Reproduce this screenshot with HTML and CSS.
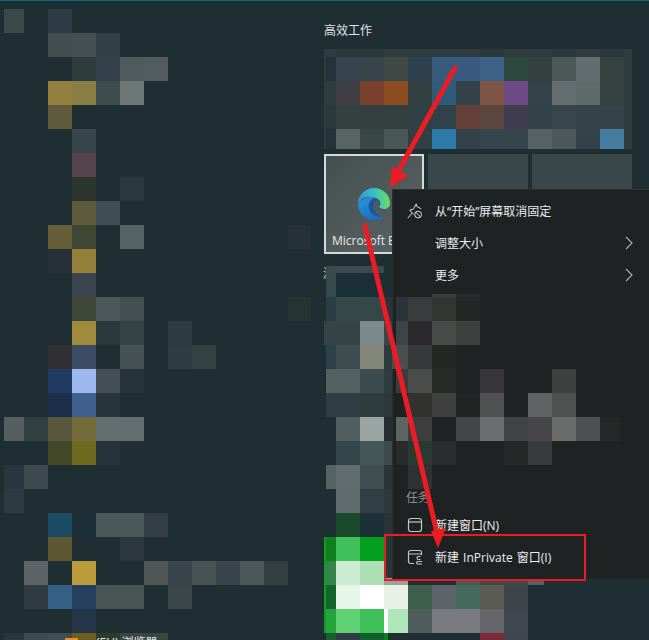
FILE: index.html
```html
<!DOCTYPE html>
<html lang="zh-CN">
<head>
    <meta charset="UTF-8">
    <meta name="viewport" content="width=device-width, initial-scale=1.0">
    <title>高效工作</title>
    <link rel="stylesheet" href="styles.css">
</head>
<body>
<div class="screen">
    <!-- blurred start menu behind everything -->
    <svg class="backdrop" width="649" height="640" viewBox="0 0 649 640">
        <rect x="0" y="0" width="649" height="1" fill="#02707f"/>
        <!-- left column -->
        <rect x="4" y="9" width="20" height="24" fill="#3a4849"/>
        <rect x="48" y="9" width="24" height="24" fill="#2d3b44"/>
        <rect x="48" y="33" width="24" height="24" fill="#434c4f"/>
        <rect x="72" y="33" width="24" height="24" fill="#434f50"/>
        <rect x="96" y="33" width="24" height="24" fill="#333f47"/>
        <rect x="72" y="57" width="24" height="24" fill="#2f3c3d"/>
        <rect x="96" y="57" width="24" height="24" fill="#35414a"/>
        <rect x="120" y="57" width="24" height="24" fill="#4e5a5c"/>
        <rect x="144" y="57" width="24" height="24" fill="#525c60"/>
        <rect x="48" y="81" width="24" height="24" fill="#93803f"/>
        <rect x="72" y="81" width="24" height="24" fill="#8b7e42"/>
        <rect x="96" y="81" width="24" height="24" fill="#3f4c4e"/>
        <rect x="120" y="81" width="24" height="24" fill="#6d7778"/>
        <rect x="48" y="105" width="24" height="24" fill="#5f5a3b"/>
        <rect x="72" y="129" width="24" height="24" fill="#36454a"/>
        <rect x="72" y="153" width="24" height="24" fill="#54434c"/>
        <rect x="72" y="177" width="24" height="24" fill="#2d352f"/>
        <rect x="120" y="177" width="24" height="24" fill="#2b383e"/>
        <rect x="72" y="201" width="24" height="24" fill="#5c5b3d"/>
        <rect x="96" y="201" width="24" height="24" fill="#3f4c54"/>
        <rect x="48" y="225" width="24" height="24" fill="#655e38"/>
        <rect x="72" y="225" width="24" height="24" fill="#414635"/>
        <rect x="120" y="225" width="24" height="24" fill="#566366"/>
        <rect x="288" y="225" width="23" height="24" fill="#263038"/>
        <rect x="48" y="249" width="24" height="24" fill="#242f37"/>
        <rect x="72" y="249" width="24" height="24" fill="#94803b"/>
        <rect x="72" y="273" width="24" height="24" fill="#39444e"/>
        <rect x="72" y="297" width="24" height="24" fill="#3d4639"/>
        <rect x="96" y="297" width="24" height="24" fill="#4c5759"/>
        <rect x="120" y="297" width="24" height="24" fill="#434e50"/>
        <rect x="288" y="297" width="23" height="24" fill="#263333"/>
        <rect x="72" y="321" width="24" height="24" fill="#a08a3c"/>
        <rect x="96" y="321" width="24" height="24" fill="#2a373d"/>
        <rect x="120" y="321" width="24" height="24" fill="#354347"/>
        <rect x="168" y="321" width="24" height="24" fill="#2c3a42"/>
        <rect x="48" y="345" width="24" height="24" fill="#302f33"/>
        <rect x="72" y="345" width="24" height="24" fill="#3c4c64"/>
        <rect x="120" y="345" width="24" height="24" fill="#465156"/>
        <rect x="168" y="345" width="24" height="24" fill="#2e3c44"/>
        <rect x="192" y="345" width="24" height="24" fill="#344143"/>
        <rect x="48" y="369" width="24" height="24" fill="#213a62"/>
        <rect x="72" y="369" width="24" height="24" fill="#9db9ef"/>
        <rect x="96" y="369" width="24" height="24" fill="#434e54"/>
        <rect x="120" y="369" width="24" height="24" fill="#26323a"/>
        <rect x="48" y="393" width="24" height="24" fill="#1b2f4a"/>
        <rect x="72" y="393" width="24" height="24" fill="#40608f"/>
        <rect x="96" y="393" width="24" height="24" fill="#28353b"/>
        <rect x="4" y="417" width="20" height="24" fill="#555f60"/>
        <rect x="24" y="417" width="24" height="24" fill="#323f3f"/>
        <rect x="48" y="417" width="24" height="24" fill="#59573d"/>
        <rect x="72" y="417" width="24" height="24" fill="#746b3b"/>
        <rect x="96" y="417" width="48" height="24" fill="#646e6f"/>
        <rect x="48" y="441" width="24" height="24" fill="#434828"/>
        <rect x="72" y="441" width="24" height="24" fill="#6d6a20"/>
        <rect x="96" y="441" width="24" height="24" fill="#27333b"/>
        <rect x="4" y="465" width="20" height="24" fill="#293640"/>
        <rect x="24" y="465" width="24" height="24" fill="#3e4a50"/>
        <rect x="4" y="489" width="20" height="24" fill="#2c3a42"/>
        <rect x="48" y="513" width="24" height="24" fill="#1b4b60"/>
        <rect x="72" y="513" width="24" height="24" fill="#1d303a"/>
        <rect x="96" y="513" width="48" height="24" fill="#4b5859"/>
        <rect x="144" y="513" width="24" height="24" fill="#323e44"/>
        <rect x="48" y="537" width="24" height="24" fill="#5d5833"/>
        <rect x="120" y="537" width="24" height="24" fill="#2c383e"/>
        <rect x="24" y="561" width="24" height="24" fill="#5c6365"/>
        <rect x="72" y="561" width="24" height="24" fill="#bc9c3a"/>
        <rect x="144" y="561" width="24" height="24" fill="#4f5656"/>
        <rect x="168" y="561" width="24" height="24" fill="#39444a"/>
        <rect x="192" y="561" width="24" height="24" fill="#485253"/>
        <rect x="216" y="561" width="24" height="24" fill="#39444a"/>
        <rect x="240" y="561" width="24" height="24" fill="#4c5758"/>
        <rect x="264" y="561" width="24" height="24" fill="#323e3f"/>
        <rect x="24" y="585" width="24" height="24" fill="#303b42"/>
        <rect x="48" y="585" width="24" height="24" fill="#356085"/>
        <rect x="72" y="585" width="24" height="24" fill="#253f5e"/>
        <rect x="96" y="585" width="48" height="24" fill="#495455"/>
        <rect x="168" y="585" width="24" height="24" fill="#3a4649"/>
        <rect x="72" y="609" width="24" height="24" fill="#263649"/>
        <rect x="4" y="633" width="20" height="7" fill="#2a363e"/>
        <rect x="24" y="633" width="24" height="7" fill="#3d4950"/>
        <rect x="48" y="633" width="24" height="7" fill="#3f4c56"/>
        <rect x="72" y="633" width="24" height="7" fill="#6d5f20"/>
        <rect x="96" y="633" width="24" height="7" fill="#2f3d2e"/>
        <rect x="120" y="633" width="48" height="7" fill="#3a4646"/>
        <rect x="65" y="638" width="13" height="2" fill="#e8902a"/>
        <text class="cut-text" x="96" y="647">(EU) 浏览器</text>
        <!-- column under the edge tile -->
        <text class="cut-label" x="323" y="278">游戏</text>
        <rect x="326" y="266" width="10" height="7" fill="#3a4a4b"/>
        <rect x="336" y="266" width="48" height="7" fill="#3d4b50"/>
        <rect x="326" y="273" width="10" height="24" fill="#38494a"/>
        <rect x="336" y="273" width="24" height="24" fill="#1c3038"/>
        <rect x="360" y="273" width="24" height="24" fill="#1b2f38"/>
        <rect x="326" y="297" width="10" height="24" fill="#2b3e45"/>
        <rect x="336" y="297" width="48" height="24" fill="#354748"/>
        <rect x="384" y="297" width="8" height="24" fill="#293639"/>
        <rect x="324" y="321" width="36" height="24" fill="#354547"/>
        <rect x="360" y="321" width="24" height="24" fill="#7d8a8c"/>
        <rect x="384" y="321" width="8" height="24" fill="#3b4648"/>
        <rect x="326" y="345" width="10" height="24" fill="#2d3f48"/>
        <rect x="336" y="345" width="24" height="24" fill="#3d4c4f"/>
        <rect x="360" y="345" width="24" height="24" fill="#818679"/>
        <rect x="384" y="345" width="8" height="24" fill="#2d3b3f"/>
        <rect x="326" y="369" width="34" height="24" fill="#546163"/>
        <rect x="360" y="369" width="24" height="24" fill="#3e4b4e"/>
        <rect x="384" y="369" width="8" height="24" fill="#2f3c40"/>
        <rect x="326" y="393" width="34" height="24" fill="#2f3e45"/>
        <rect x="360" y="393" width="24" height="24" fill="#2e3c3e"/>
        <rect x="384" y="393" width="8" height="24" fill="#2a383b"/>
        <rect x="336" y="417" width="24" height="24" fill="#505e60"/>
        <rect x="360" y="417" width="24" height="24" fill="#9aa5a4"/>
        <rect x="384" y="417" width="8" height="24" fill="#282d2f"/>
        <rect x="336" y="441" width="24" height="24" fill="#34464a"/>
        <rect x="360" y="441" width="24" height="24" fill="#455658"/>
        <rect x="384" y="441" width="8" height="24" fill="#3f4a4c"/>
        <rect x="326" y="465" width="10" height="24" fill="#566365"/>
        <rect x="336" y="465" width="24" height="24" fill="#626d6f"/>
        <rect x="360" y="465" width="24" height="24" fill="#3f4e50"/>
        <rect x="384" y="465" width="8" height="24" fill="#293538"/>
        <rect x="336" y="489" width="24" height="24" fill="#5e6a6c"/>
        <rect x="360" y="489" width="24" height="24" fill="#2f3f44"/>
        <rect x="384" y="489" width="8" height="24" fill="#2c383c"/>
        <rect x="336" y="513" width="24" height="24" fill="#1b4a2c"/>
        <rect x="360" y="513" width="24" height="24" fill="#1c3038"/>
        <rect x="384" y="513" width="8" height="24" fill="#2a3438"/>
        <!-- green tile -->
        <rect x="324" y="537" width="2" height="96" fill="#0da01d"/>
        <rect x="326" y="537" width="10" height="24" fill="#0f7f1f"/>
        <rect x="336" y="537" width="24" height="24" fill="#3ec15a"/>
        <rect x="360" y="537" width="24" height="24" fill="#04a01f"/>
        <rect x="384" y="537" width="8" height="24" fill="#253a33"/>
        <rect x="326" y="561" width="10" height="24" fill="#37844a"/>
        <rect x="336" y="561" width="24" height="24" fill="#cbecd2"/>
        <rect x="360" y="561" width="24" height="24" fill="#addfb6"/>
        <rect x="384" y="561" width="24" height="24" fill="#2a3438"/>
        <rect x="384" y="578" width="24" height="7" fill="#9aa39c"/>
        <rect x="456" y="578" width="24" height="7" fill="#4a5a50"/>
        <rect x="480" y="578" width="24" height="7" fill="#3d4a44"/>
        <rect x="504" y="578" width="24" height="7" fill="#3e484a"/>
        <rect x="528" y="578" width="16" height="7" fill="#5a5f60"/>
        <rect x="326" y="585" width="10" height="24" fill="#16652e"/>
        <rect x="336" y="585" width="24" height="24" fill="#e6f7ea"/>
        <rect x="360" y="585" width="24" height="24" fill="#ffffff"/>
        <rect x="384" y="585" width="24" height="24" fill="#e7f0e6"/>
        <rect x="408" y="585" width="24" height="24" fill="#3d5f4b"/>
        <rect x="432" y="585" width="24" height="24" fill="#5f6468"/>
        <rect x="456" y="585" width="24" height="24" fill="#446a5e"/>
        <rect x="480" y="585" width="24" height="24" fill="#5a5a52"/>
        <rect x="504" y="585" width="24" height="24" fill="#3d444a"/>
        <rect x="326" y="609" width="10" height="24" fill="#27a33e"/>
        <rect x="336" y="609" width="24" height="24" fill="#5fd173"/>
        <rect x="360" y="609" width="24" height="24" fill="#3fc058"/>
        <rect x="384" y="609" width="4" height="24" fill="#ffffff"/>
        <rect x="388" y="609" width="20" height="24" fill="#b0e6bb"/>
        <rect x="408" y="609" width="24" height="24" fill="#4e5c5c"/>
        <rect x="432" y="609" width="48" height="24" fill="#787c80"/>
        <rect x="480" y="609" width="24" height="24" fill="#64666c"/>
        <rect x="504" y="609" width="24" height="24" fill="#41474e"/>
        <rect x="326" y="633" width="10" height="7" fill="#1f5c2f"/>
        <rect x="336" y="633" width="24" height="7" fill="#2e3b45"/>
        <rect x="360" y="633" width="24" height="7" fill="#10602a"/>
        <rect x="384" y="633" width="4" height="7" fill="#0f7f1f"/>
        <rect x="480" y="633" width="24" height="7" fill="#7c2b3a"/>
        <rect x="504" y="633" width="24" height="7" fill="#3f4650"/>
    </svg>

    <section class="group">
        <h2 class="group-title">高效工作</h2>
        <svg class="tile-block" width="308" height="100" viewBox="324 49 308 100">
            <rect x="324" y="49" width="308" height="100" fill="#2e3c3f"/>
            <rect x="336" y="49" width="48" height="8" fill="#2a383c"/>
            <rect x="480" y="49" width="24" height="8" fill="#2a3a3a"/>
            <rect x="552" y="49" width="24" height="8" fill="#2a383c"/>
            <rect x="600" y="49" width="24" height="8" fill="#2a383c"/>
            <rect x="326" y="57" width="10" height="24" fill="#24323a"/>
            <rect x="326" y="105" width="10" height="24" fill="#2a383c"/>
            <rect x="326" y="129" width="10" height="20" fill="#24323a"/>
            <rect x="336" y="57" width="24" height="24" fill="#37444d"/>
            <rect x="360" y="57" width="24" height="24" fill="#37454b"/>
            <rect x="384" y="57" width="24" height="24" fill="#3f4845"/>
            <rect x="408" y="57" width="24" height="24" fill="#2e404d"/>
            <rect x="432" y="57" width="24" height="24" fill="#365b7d"/>
            <rect x="456" y="57" width="24" height="24" fill="#3a5a80"/>
            <rect x="480" y="57" width="24" height="24" fill="#3d6285"/>
            <rect x="504" y="57" width="24" height="24" fill="#2c483f"/>
            <rect x="528" y="57" width="24" height="24" fill="#343f40"/>
            <rect x="552" y="57" width="24" height="24" fill="#4d5859"/>
            <rect x="576" y="57" width="24" height="24" fill="#636c70"/>
            <rect x="600" y="57" width="24" height="24" fill="#354141"/>
            <rect x="336" y="81" width="24" height="24" fill="#403f43"/>
            <rect x="360" y="81" width="24" height="24" fill="#77412d"/>
            <rect x="384" y="81" width="24" height="24" fill="#8b4d20"/>
            <rect x="408" y="81" width="24" height="24" fill="#303f3f"/>
            <rect x="432" y="81" width="24" height="24" fill="#2e5b78"/>
            <rect x="456" y="81" width="24" height="24" fill="#33414a"/>
            <rect x="480" y="81" width="24" height="24" fill="#7e5445"/>
            <rect x="504" y="81" width="24" height="24" fill="#6e4a86"/>
            <rect x="528" y="81" width="24" height="24" fill="#354249"/>
            <rect x="552" y="81" width="24" height="24" fill="#646e70"/>
            <rect x="576" y="81" width="24" height="24" fill="#5e6a6a"/>
            <rect x="600" y="81" width="24" height="24" fill="#354141"/>
            <rect x="336" y="105" width="72" height="24" fill="#344040"/>
            <rect x="408" y="105" width="24" height="24" fill="#304045"/>
            <rect x="432" y="105" width="24" height="24" fill="#304249"/>
            <rect x="456" y="105" width="24" height="24" fill="#643f37"/>
            <rect x="480" y="105" width="24" height="24" fill="#5e4640"/>
            <rect x="504" y="105" width="24" height="24" fill="#413d50"/>
            <rect x="528" y="105" width="24" height="24" fill="#334149"/>
            <rect x="552" y="105" width="24" height="24" fill="#38454b"/>
            <rect x="576" y="105" width="48" height="24" fill="#35444b"/>
            <rect x="336" y="129" width="24" height="20" fill="#586464"/>
            <rect x="360" y="129" width="24" height="20" fill="#394646"/>
            <rect x="384" y="129" width="24" height="20" fill="#4a5757"/>
            <rect x="408" y="129" width="24" height="20" fill="#304044"/>
            <rect x="432" y="129" width="24" height="20" fill="#2d7ba8"/>
            <rect x="456" y="129" width="24" height="20" fill="#33424a"/>
            <rect x="480" y="129" width="48" height="20" fill="#36444c"/>
            <rect x="528" y="129" width="24" height="20" fill="#566262"/>
            <rect x="552" y="129" width="24" height="20" fill="#4c5858"/>
            <rect x="576" y="129" width="24" height="20" fill="#334149"/>
            <rect x="600" y="129" width="24" height="20" fill="#467c9f"/>
        </svg>
        <div class="tile-row">
            <div class="tile tile-edge">
                <svg class="edge-logo" width="32" height="32" viewBox="0 0 32 32">
                    <defs>
                        <linearGradient id="edgeTop" x1="0" y1="0.5" x2="1" y2="0.5">
                            <stop offset="0" stop-color="#2a9ad8"/>
                            <stop offset="0.5" stop-color="#35bfc6"/>
                            <stop offset="1" stop-color="#72dc62"/>
                        </linearGradient>
                        <linearGradient id="edgeBody" x1="0" y1="0" x2="0.6" y2="1">
                            <stop offset="0" stop-color="#2a95e0"/>
                            <stop offset="1" stop-color="#1a6fc4"/>
                        </linearGradient>
                    </defs>
                    <path fill="#1a559f" d="M10 20C10 13 16 9 22 11L26 29C23 31 19 32 16 32 12 30 10 25 10 20Z"/>
                    <path fill="url(#edgeBody)" d="M0 16C0 25 7 32 16 32 20 32 24 31 27 28 22 30 15 28 12 23 9 18 11 11 18 9 10 8 2 11 0 16Z"/>
                    <path fill="#505b5c" d="M15 17C15 14 18 12 20.500 13 22 15 22 17 20.500 19 22 22 25 23 29 22.500 28.500 25 27.500 27 26 29 20 29 15 24 15 17Z"/>
                    <path fill="url(#edgeTop)" d="M0 16C0 7 7 0 16 0 25 0 32 7 32 15 32 19 29 21 26 21 24 21 22 20 21 19 23 17 23 14 21 12 17 8 10 8 5 10 2 12 1 13 0 16Z"/>
                </svg>
                <span class="tile-name">Microsoft Edge</span>
            </div>
            <div class="tile"></div>
            <div class="tile"></div>
        </div>
    </section>

    <!-- context menu -->
    <div class="menu">
        <div class="menu-row">
            <svg class="menu-icon" width="17" height="18" viewBox="0 0 17 18" fill="none" stroke="#e0e2e2" stroke-width="1.100">
                <path d="M.5 17L5 11.500M2.500 8L6.500 7 10 1 10 3.500 15.500 6.500"/>
                <path d="M2.500 8L7 13"/>
                <circle cx="12" cy="13" r="3.800"/>
                <path d="M9.500 10.500l5 5"/>
            </svg>
            <span>从“开始”屏幕取消固定</span>
        </div>
        <div class="menu-row">
            <span class="menu-icon"></span>
            <span>调整大小</span>
            <svg class="chevron" width="8" height="14" viewBox="0 0 8 14" fill="none" stroke="#a8aaaa" stroke-width="1.200"><path d="M1 1l6 6-6 6"/></svg>
        </div>
        <div class="menu-row">
            <span class="menu-icon"></span>
            <span>更多</span>
            <svg class="chevron" width="8" height="14" viewBox="0 0 8 14" fill="none" stroke="#a8aaaa" stroke-width="1.200"><path d="M1 1l6 6-6 6"/></svg>
        </div>
        <!-- blurred list of recent items -->
        <svg class="menu-blur" width="257" height="198" viewBox="392 291 257 198">
            <rect x="432" y="294" width="24" height="3" fill="#3c3f3f"/>
            <rect x="456" y="294" width="24" height="3" fill="#2a2d2d"/>
            <rect x="396" y="297" width="12" height="24" fill="#2b3539"/>
            <rect x="408" y="297" width="24" height="24" fill="#383c3c"/>
            <rect x="432" y="297" width="24" height="24" fill="#333533"/>
            <rect x="456" y="297" width="24" height="24" fill="#242725"/>
            <rect x="396" y="321" width="12" height="24" fill="#3e4345"/>
            <rect x="408" y="321" width="24" height="24" fill="#2a2a2c"/>
            <rect x="432" y="321" width="24" height="24" fill="#494b4a"/>
            <rect x="456" y="321" width="24" height="24" fill="#3e403e"/>
            <rect x="392" y="345" width="16" height="24" fill="#4a4e4e"/>
            <rect x="408" y="345" width="24" height="24" fill="#36393a"/>
            <rect x="432" y="345" width="24" height="24" fill="#252725"/>
            <rect x="396" y="369" width="12" height="24" fill="#3a3d3c"/>
            <rect x="408" y="369" width="24" height="24" fill="#4a4c4a"/>
            <rect x="432" y="369" width="24" height="24" fill="#282a27"/>
            <rect x="480" y="369" width="24" height="24" fill="#373739"/>
            <rect x="552" y="369" width="24" height="24" fill="#3f413f"/>
            <rect x="408" y="393" width="24" height="24" fill="#323230"/>
            <rect x="432" y="393" width="24" height="24" fill="#3f403f"/>
            <rect x="456" y="393" width="24" height="24" fill="#232524"/>
            <rect x="480" y="393" width="24" height="24" fill="#4f5050"/>
            <rect x="528" y="393" width="24" height="24" fill="#616264"/>
            <rect x="552" y="393" width="24" height="24" fill="#4f514f"/>
            <rect x="396" y="417" width="12" height="24" fill="#5c6464"/>
            <rect x="408" y="417" width="24" height="24" fill="#3d3d3f"/>
            <rect x="456" y="417" width="24" height="24" fill="#434646"/>
            <rect x="480" y="417" width="24" height="24" fill="#6a6e6e"/>
            <rect x="504" y="417" width="24" height="24" fill="#404343"/>
            <rect x="528" y="417" width="24" height="24" fill="#474749"/>
            <rect x="552" y="417" width="24" height="24" fill="#6a6c6a"/>
            <rect x="576" y="417" width="24" height="24" fill="#4e4f50"/>
            <rect x="600" y="417" width="20" height="24" fill="#262828"/>
            <rect x="396" y="441" width="12" height="24" fill="#282c2e"/>
            <rect x="408" y="441" width="24" height="24" fill="#2a3a30"/>
            <rect x="432" y="441" width="24" height="24" fill="#292d2d"/>
            <rect x="504" y="441" width="24" height="24" fill="#252827"/>
            <rect x="528" y="441" width="24" height="24" fill="#373b3b"/>
            <rect x="408" y="465" width="24" height="24" fill="#2e3232"/>
        </svg>
        <div class="menu-label">任务</div>
        <div class="menu-row">
            <svg class="menu-icon" width="16" height="16" viewBox="0 0 16 16" fill="none" stroke="#c4c6c6" stroke-width="1.200">
                <rect x="1.500" y="1.500" width="13" height="13" rx="2.500"/>
                <path d="M1.500 5h13"/>
            </svg>
            <span>新建窗口(N)</span>
        </div>
        <div class="menu-row">
            <svg class="menu-icon" width="16" height="16" viewBox="0 0 16 16" fill="none" stroke="#c4c6c6" stroke-width="1.200">
                <path d="M7 14.500H3.500a2 2 0 0 1-2-2v-9a2 2 0 0 1 2-2h9a2 2 0 0 1 2 2V6M1.500 5h13"/>
                <path d="M13.500 7.500h-2a1.500 1.500 0 0 0 0 3h2M15 12.500H10.500a1.300 1.300 0 0 0 0 2.500H15"/>
            </svg>
            <span>新建 InPrivate 窗口(I)</span>
        </div>
    </div>

    <!-- annotations drawn on the screenshot -->
    <svg class="marks" width="649" height="640" viewBox="0 0 649 640">
        <rect x="385" y="535" width="200" height="45" fill="none" stroke="#ec1c24" stroke-width="2"/>
        <path d="M455 68L398 172" stroke="#ec1c24" stroke-width="5" stroke-linecap="round"/>
        <path d="M390 188L392 166 408 176Z" fill="#ec1c24"/>
        <path d="M365 226L437 533" stroke="#ec1c24" stroke-width="5" stroke-linecap="round"/>
        <path d="M438 548L431 531 446 528Z" fill="#ec1c24"/>
    </svg>
</div>
</body>
</html>
```
FILE: styles.css
```css
*{
    margin:0;
    padding:0;
    box-sizing:border-box;
}
body{
    background:#1f2e33;
    font-family:"Open Sans","Noto Sans CJK SC",sans-serif;
    font-size:12px;
    color:#e6e8e8;
}
.screen{
    position:relative;
    width:649px;
    height:640px;
    overflow:hidden;
}
.backdrop,.marks{
    position:absolute;
    left:0;
    top:0;
}
.cut-text{
    font-size:12px;
    fill:#e8eaea;
}
.cut-label{
    font-size:12px;
    fill:#c8cccc;
}
.group{
    position:relative;
    margin-left:324px;
    width:308px;
    padding-top:22px;
}
.group-title{
    font-size:12px;
    font-weight:400;
    line-height:18px;
    height:27px;
    color:#dfe3e3;
}
.tile-block{
    display:block;
}
.tile-row{
    display:grid;
    grid-template-columns:100px 100px 100px;
    justify-content:space-between;
    margin-top:5px;
}
.tile{
    height:100px;
    background:#39474a;
}
.tile-edge{
    display:flex;
    flex-direction:column;
    align-items:flex-start;
    background:linear-gradient(135deg,#454f50,#5a6464);
    border:2px solid #d6d9d9;
    padding:32px 0 0 6px;
    overflow:hidden;
}
.edge-logo{
    margin-left:26px;
}
.tile-name{
    margin-top:13px;
    line-height:16px;
    white-space:nowrap;
}
.menu{
    position:absolute;
    left:392px;
    top:189px;
    width:257px;
    height:390px;
    padding:5px 0 6px;
    display:flex;
    flex-direction:column;
    background:#1f2223;
    border:1px solid #2c3032;
    border-right:none;
    border-bottom:none;
}
.menu-row{
    display:flex;
    align-items:center;
    height:32px;
    padding:0 16px 0 14px;
    gap:12px;
    flex:none;
    color:#eceeee;
    word-spacing:1px;
}
.menu-icon{
    display:block;
    width:16px;
    height:16px;
    flex:none;
}
.chevron{
    margin-left:auto;
}
.menu-blur{
    display:block;
    flex:none;
    margin-left:-1px;
}
.menu-label{
    height:20px;
    line-height:16px;
    padding-top:1px;
    padding-left:13px;
    color:#8d9090;
    flex:none;
}
```
